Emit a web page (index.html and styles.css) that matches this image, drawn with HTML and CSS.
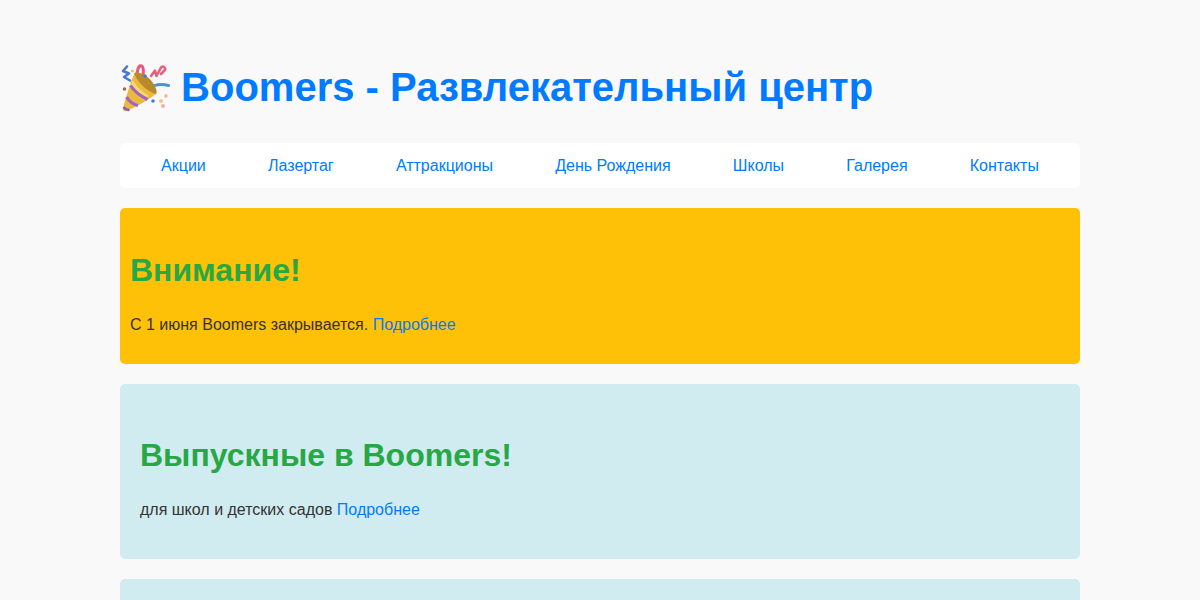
FILE: index.html
```html
<!DOCTYPE html>
<html>
<head>
  <title>Boomers - Развлекательный центр</title>
  <link rel="stylesheet" href="styles.css">
</head>
<body>
  <div class="container">
    <header>
      <h1>
        <svg class="party" viewBox="0 0 50 48" width="50" height="48">
          <!-- streamers -->
          <path d="M7 2.5 L3 7 L9 9.5 L4 13 L10 16.5" fill="none" stroke="#4a78d8" stroke-width="2.6" stroke-linecap="round" stroke-linejoin="round"/>
          <path d="M16 17 C17 10 17.5 2 20.5 1.8 C24 2 23.5 7 23 12" fill="none" stroke="#e9587a" stroke-width="3" stroke-linecap="round"/>
          <path d="M31 12 L35 6.5 L36.5 12 L41 3.5 C43 1 46.5 4 44.5 6.5 L41 10" fill="none" stroke="#e9607f" stroke-width="2.6" stroke-linecap="round" stroke-linejoin="round"/>
          <path d="M28 25 C34 20.5 41 19.5 48.5 21.5" fill="none" stroke="#4f8fe0" stroke-width="3" stroke-linecap="round"/>
          <!-- cone -->
          <path d="M3 44 C2 47 5 48 8 46.5 C18 42 28 36 36 30 C35 22 24 10 14.5 9 C10 20 6 33 3 44 Z" fill="#eab93f"/>
          <path d="M14.5 9 C20 7 29 13 33 19 C36.5 24 37.5 29 36 30 C32 29 25 25 21 20 C17.5 16 14.5 12 14.5 9 Z" fill="#b98a2c"/>
          <path d="M13 16 C16 22 21 27 29 32 L24 36 C18 31 13 26 10.5 22 Z" fill="#f6d96e"/>
          <path d="M10.5 21.5 C14 27 20.5 32 27.5 35.5" fill="none" stroke="#a163c4" stroke-width="3.2"/>
          <path d="M6.5 33 C9 37 13 40.5 18 41.5" fill="none" stroke="#a163c4" stroke-width="3.2"/>
          <path d="M3.5 43 C5 45 7 46 9.5 46" fill="none" stroke="#8f58b8" stroke-width="2.4"/>
          <!-- confetti -->
          <circle cx="25" cy="12" r="1.8" fill="#4a78d8"/>
          <circle cx="33" cy="37" r="1.8" fill="#4a78d8"/>
          <circle cx="46" cy="32" r="1.8" fill="#f0b98a"/>
          <circle cx="41" cy="37" r="2" fill="#f0c28e"/>
          <circle cx="43" cy="42" r="2" fill="#eeb0a8"/>
          <circle cx="4.5" cy="25" r="1.8" fill="#b5604e"/>
          <circle cx="12.5" cy="7" r="1.6" fill="#f0c850"/>
        </svg>
        Boomers - Развлекательный центр
      </h1>
    </header>
    <nav>
      <a href="#">Акции</a>
      <a href="#">Лазертаг</a>
      <a href="#">Аттракционы</a>
      <a href="#">День Рождения</a>
      <a href="#">Школы</a>
      <a href="#">Галерея</a>
      <a href="#">Контакты</a>
    </nav>
    <section class="alert">
      <h2>Внимание!</h2>
      <p>С 1 июня Boomers закрывается. <a href="#">Подробнее</a></p>
    </section>
    <section class="promo">
      <h2>Выпускные в Boomers!</h2>
      <p>для школ и детских садов <a href="#">Подробнее</a></p>
    </section>
    <section class="promo"></section>
  </div>
</body>
</html>
```

FILE: styles.css
```css
body {
  font-family: "Liberation Sans", Arial, sans-serif;
  font-size: 16px;
  line-height: 1.6;
  color: #333;
  background-color: #f9f9f9;
  margin: 0;
  padding: 0;
}
a {
  color: #007bff;
  text-decoration: none;
}
.container {
  width: 960px;
  margin: 0 auto;
}
header {
  padding: 55px 0 23.7px;
}
h1 {
  font-size: 40px;
  color: #007bff;
  margin: 0;
}
.party {
  vertical-align: -11px;
}
nav {
  display: flex;
  justify-content: space-around;
  background-color: #fff;
  border-radius: 5px;
  padding: 10px;
  margin-bottom: 20px;
}
section {
  border-radius: 5px;
  margin-bottom: 20px;
}
h2 {
  font-size: 32px;
  color: #28a745;
  margin: 26.56px 0 16px;
}
p {
  margin: 16px 0;
}
.alert {
  background-color: #ffc107;
  padding: 10px;
}
.promo {
  background-color: #d1ecf1;
  padding: 20px;
}
```
